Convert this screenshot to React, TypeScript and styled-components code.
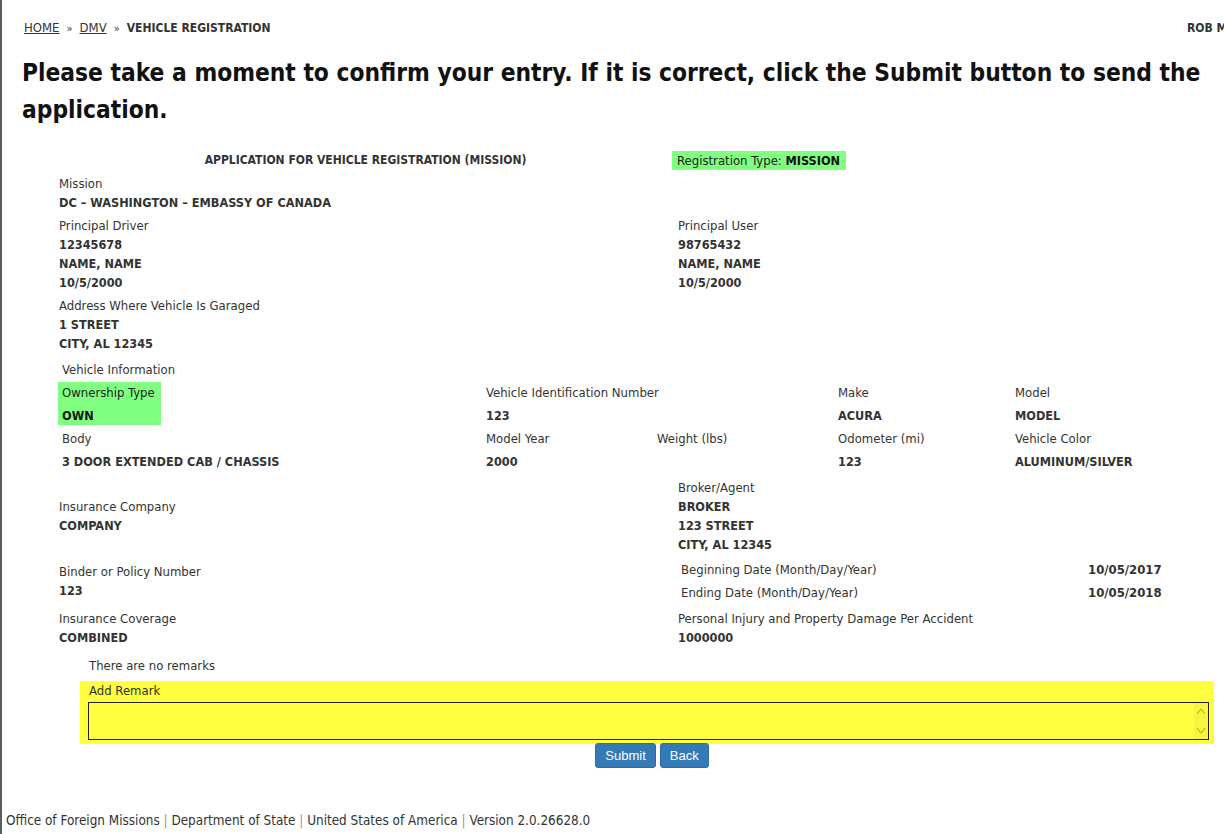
import React from "react";
import styled, { createGlobalStyle } from "styled-components";

const GlobalStyle = createGlobalStyle`
  html, body { margin: 0; padding: 0; background: #fff; }
  body {
    font-family: "DejaVu Sans Condensed", "DejaVu Sans", "Liberation Sans", sans-serif;
    font-stretch: condensed;
    color: #333;
    overflow: hidden;
  }
  * { box-sizing: border-box; }
`;

const Page = styled.div`
  display: flex;
  flex-direction: column;
  height: 834px;
  border-left: 2px solid #5c5c5c;
`;

const TopBar = styled.div`
  display: flex;
  justify-content: space-between;
  align-items: baseline;
  padding: 19px 0 0 22px;
  font-size: 12px;
  line-height: 17px;
  color: #333;
`;

const Crumbs = styled.div`
  display: flex;
  align-items: baseline;
  white-space: nowrap;
`;

const CrumbLink = styled.a`
  color: #333;
  font-size: 13px;
  text-decoration: underline;
`;

const Sep = styled.span`
  padding: 0 7px;
  font-size: 11px;
`;

const Current = styled.span`
  font-weight: 700;
`;

const UserName = styled.div`
  width: 37px;
  overflow: hidden;
  white-space: nowrap;
  font-weight: 700;
`;

const Heading = styled.h1`
  margin: 17px 4px 0 20px;
  font-size: 24.3px;
  line-height: 37px;
  font-weight: 700;
  color: #111;
`;

const Form = styled.div`
  display: flex;
  flex-direction: column;
  gap: 4px;
  padding-left: 57px;
  margin-top: 23px;
  font-size: 13px;
  line-height: 19px;
`;

const TwoCol = styled.div<{ $center?: boolean; $mt?: number }>`
  display: grid;
  grid-template-columns: 619px 1fr;
  align-items: ${(p) => (p.$center ? "center" : "start")};
  margin-top: ${(p) => p.$mt ?? 0}px;
`;

const FormTitle = styled.div`
  text-align: center;
  font-weight: 700;
  font-size: 12px;
  padding-right: 6px;
`;

const RegType = styled.div`
  justify-self: start;
  margin-left: -6px;
  padding: 0 6px 0 5px;
  background: #80ff80;
  color: #222;
`;

const RegValue = styled.b`
  color: #111;
  font-size: 12.6px;
`;

const Field = styled.div`
  display: flex;
  flex-direction: column;
`;

const Label = styled.div`
  color: #333;
`;

const Value = styled.div`
  font-weight: 700;
  font-size: 12.6px;
  color: #333;
`;

const SectionLabel = styled.div<{ $mt?: number }>`
  padding-left: 3px;
  margin-top: ${(p) => p.$mt ?? 0}px;
`;

const VehicleGrid = styled.div`
  display: grid;
  grid-template-columns: 424px 171px 181px 177px 1fr;
  row-gap: 3px;
  margin: -1px 0 0 -1px;
`;

const Cell = styled.div<{ $span?: number; $hl?: boolean }>`
  display: flex;
  flex-direction: column;
  gap: 4px;
  padding: 1px 4px 0;
  height: 43px;
  grid-column: span ${(p) => p.$span ?? 1};
  background: ${(p) => (p.$hl ? "#80ff80" : "transparent")};
  justify-self: ${(p) => (p.$hl ? "start" : "stretch")};
  padding-right: ${(p) => (p.$hl ? "6px" : "4px")};
`;

const HlLabel = styled(Label)`
  color: #222;
`;

const HlValue = styled(Value)`
  color: #111;
`;

const DateTable = styled.div`
  display: grid;
  grid-template-columns: 407px 1fr;
  margin-left: 3px;
`;

const DateLabel = styled.div`
  padding: 2px 0;
`;

const DateValue = styled.div`
  padding: 2px 0;
  font-weight: 700;
  font-size: 13px;
`;

const RemarksArea = styled.div`
  display: flex;
  flex-direction: column;
  margin: 9px 0 0 78px;
  font-size: 13px;
  line-height: 19px;
`;

const NoRemarks = styled.div`
  padding-left: 9px;
`;

const YellowBox = styled.div`
  margin: 6px 10px 0 0;
  padding: 0 5px 4px 8px;
  background: #ffff40;
  display: flex;
  flex-direction: column;
`;

const RemarkLabel = styled.label`
  padding-left: 1px;
  color: #333;
`;

const TextWrap = styled.div`
  position: relative;
  margin-top: 2px;
`;

const RemarkInput = styled.textarea`
  display: block;
  width: 100%;
  height: 38px;
  border: 1px solid #222;
  background: #ffff40;
  resize: none;
  overflow: hidden;
  font-family: inherit;
  font-size: 13px;
  outline: none;
  padding: 2px 4px;
`;

const ScrollTrack = styled.div`
  position: absolute;
  top: 1px;
  right: 1px;
  bottom: 1px;
  width: 14px;
  background: #f6f63e;
  display: flex;
  align-items: center;
  justify-content: center;
  pointer-events: none;
`;

const Buttons = styled.div`
  display: flex;
  justify-content: center;
  gap: 4px;
  margin-top: -1px;
`;

const Button = styled.button`
  height: 25px;
  padding: 0 9px;
  font-family: "Liberation Sans", Arial, sans-serif;
  font-stretch: normal;
  font-size: 13px;
  color: #fff;
  background: #337ab7;
  border: 1px solid #2e6da4;
  border-radius: 3px;
  cursor: pointer;
`;

const Footer = styled.div`
  margin-top: auto;
  padding: 0 0 4px 4px;
  font-size: 13.4px;
  line-height: 18px;
  color: #333;
  white-space: nowrap;
`;

const Pipe = styled.span`
  color: #999;
`;

export default function App() {
  return (
    <>
      <GlobalStyle />
      <Page>
        <TopBar>
          <Crumbs>
            <CrumbLink href="#">HOME</CrumbLink>
            <Sep>»</Sep>
            <CrumbLink href="#">DMV</CrumbLink>
            <Sep>»</Sep>
            <Current>VEHICLE REGISTRATION</Current>
          </Crumbs>
          <UserName>ROB MILLER</UserName>
        </TopBar>

        <Heading>
          Please take a moment to confirm your entry. If it is correct, click the Submit button to send the
          application.
        </Heading>

        <Form>
          <TwoCol $center>
            <FormTitle>APPLICATION FOR VEHICLE REGISTRATION (MISSION)</FormTitle>
            <RegType>
              Registration Type: <RegValue>MISSION</RegValue>
            </RegType>
          </TwoCol>

          <Field>
            <Label>Mission</Label>
            <Value>DC – WASHINGTON – EMBASSY OF CANADA</Value>
          </Field>

          <TwoCol>
            <Field>
              <Label>Principal Driver</Label>
              <Value>12345678</Value>
              <Value>NAME, NAME</Value>
              <Value>10/5/2000</Value>
            </Field>
            <Field>
              <Label>Principal User</Label>
              <Value>98765432</Value>
              <Value>NAME, NAME</Value>
              <Value>10/5/2000</Value>
            </Field>
          </TwoCol>

          <Field>
            <Label>Address Where Vehicle Is Garaged</Label>
            <Value>1 STREET</Value>
            <Value>CITY, AL 12345</Value>
          </Field>

          <SectionLabel $mt={3}>Vehicle Information</SectionLabel>

          <VehicleGrid>
            <Cell $hl>
              <HlLabel>Ownership Type</HlLabel>
              <HlValue>OWN</HlValue>
            </Cell>
            <Cell $span={2}>
              <Label>Vehicle Identification Number</Label>
              <Value>123</Value>
            </Cell>
            <Cell>
              <Label>Make</Label>
              <Value>ACURA</Value>
            </Cell>
            <Cell>
              <Label>Model</Label>
              <Value>MODEL</Value>
            </Cell>

            <Cell>
              <Label>Body</Label>
              <Value>3 DOOR EXTENDED CAB / CHASSIS</Value>
            </Cell>
            <Cell>
              <Label>Model Year</Label>
              <Value>2000</Value>
            </Cell>
            <Cell>
              <Label>Weight (lbs)</Label>
            </Cell>
            <Cell>
              <Label>Odometer (mi)</Label>
              <Value>123</Value>
            </Cell>
            <Cell>
              <Label>Vehicle Color</Label>
              <Value>ALUMINUM/SILVER</Value>
            </Cell>
          </VehicleGrid>

          <TwoCol $center $mt={3}>
            <Field>
              <Label>Insurance Company</Label>
              <Value>COMPANY</Value>
            </Field>
            <Field>
              <Label>Broker/Agent</Label>
              <Value>BROKER</Value>
              <Value>123 STREET</Value>
              <Value>CITY, AL 12345</Value>
            </Field>
          </TwoCol>

          <TwoCol $center>
            <Field>
              <Label>Binder or Policy Number</Label>
              <Value>123</Value>
            </Field>
            <DateTable>
              <DateLabel>Beginning Date (Month/Day/Year)</DateLabel>
              <DateValue>10/05/2017</DateValue>
              <DateLabel>Ending Date (Month/Day/Year)</DateLabel>
              <DateValue>10/05/2018</DateValue>
            </DateTable>
          </TwoCol>

          <TwoCol $center $mt={1}>
            <Field>
              <Label>Insurance Coverage</Label>
              <Value>COMBINED</Value>
            </Field>
            <Field>
              <Label>Personal Injury and Property Damage Per Accident</Label>
              <Value>1000000</Value>
            </Field>
          </TwoCol>
        </Form>

        <RemarksArea>
          <NoRemarks>There are no remarks</NoRemarks>
          <YellowBox>
            <RemarkLabel htmlFor="remark">Add Remark</RemarkLabel>
            <TextWrap>
              <RemarkInput id="remark" />
              <ScrollTrack>
                <svg width="12" height="34" viewBox="0 0 12 34" fill="none" stroke="#c9c92a" strokeWidth="1.6">
                  <polyline points="2,10 6,5 10,10" />
                  <polyline points="2,24 6,29 10,24" />
                </svg>
              </ScrollTrack>
            </TextWrap>
          </YellowBox>
          <Buttons>
            <Button type="button">Submit</Button>
            <Button type="button">Back</Button>
          </Buttons>
        </RemarksArea>

        <Footer>
          Office of Foreign Missions <Pipe>|</Pipe> Department of State <Pipe>|</Pipe> United States of America{" "}
          <Pipe>|</Pipe> Version 2.0.26628.0
        </Footer>
      </Page>
    </>
  );
}
